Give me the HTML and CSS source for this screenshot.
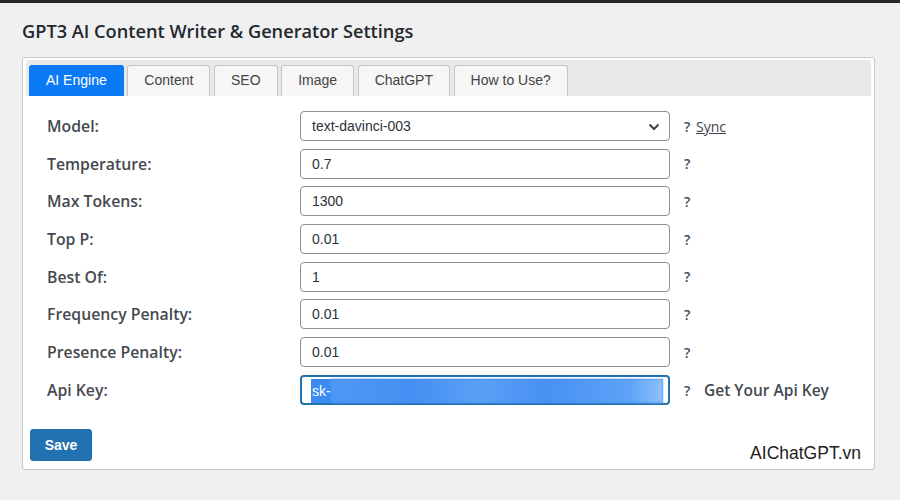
FILE: index.html
```html
<!DOCTYPE html>
<html>
<head>
<meta charset="utf-8">
<link rel="stylesheet" href="styles.css">
</head>
<body>
<div class="topbar"></div>
<div class="wrap">
  <h1 class="title">GPT3 AI Content Writer &amp; Generator Settings</h1>
  <div class="panel">
    <div class="tabs">
      <div class="tab active">AI Engine</div>
      <div class="tab">Content</div>
      <div class="tab">SEO</div>
      <div class="tab">Image</div>
      <div class="tab">ChatGPT</div>
      <div class="tab">How to Use?</div>
    </div>
    <div class="form">
      <div class="label">Model:</div>
      <div class="field select">text-davinci-003
        <svg class="chev" width="12" height="8" viewBox="0 0 12 8"><path d="M1.5 1.5 L6 6 L10.5 1.5" fill="none" stroke="#3c434a" stroke-width="2"/></svg>
      </div>
      <div class="help">? <a class="link">Sync</a></div>

      <div class="label">Temperature:</div>
      <div class="field">0.7</div>
      <div class="help">?</div>

      <div class="label">Max Tokens:</div>
      <div class="field">1300</div>
      <div class="help">?</div>

      <div class="label">Top P:</div>
      <div class="field">0.01</div>
      <div class="help">?</div>

      <div class="label">Best Of:</div>
      <div class="field">1</div>
      <div class="help">?</div>

      <div class="label">Frequency Penalty:</div>
      <div class="field">0.01</div>
      <div class="help">?</div>

      <div class="label">Presence Penalty:</div>
      <div class="field">0.01</div>
      <div class="help">?</div>

      <div class="label">Api Key:</div>
      <div class="field focus"><span class="sel"><span class="sk">sk-</span><span class="blur"></span></span></div>
      <div class="help">? <span class="getkey">Get Your Api Key</span></div>
    </div>
    <button class="save">Save</button>
    <div class="watermark">AIChatGPT.vn</div>
  </div>
</div>
</body>
</html>
```
FILE: styles.css
```css
* { box-sizing: border-box; }
html, body { margin: 0; padding: 0; }
body {
  background: #f0f0f1;
  width: 900px;
  height: 500px;
  overflow: hidden;
  font-family: "Open Sans", "Liberation Sans", sans-serif;
  color: #3c434a;
}
.topbar { height: 3px; background: #23282d; }
.wrap { padding: 0 25px 0 22px; }
.title {
  margin: 0;
  padding-top: 16px;
  height: 54px;
  font-size: 18.2px;
  font-weight: 600;
  color: #23282d;
  line-height: 24px;
}
.panel {
  position: relative;
  width: 853px;
  height: 413px;
  background: #fff;
  border: 1px solid #c8c8c8;
  border-radius: 3px;
  padding: 2px 3px;
}
.tabs {
  display: flex;
  gap: 3.6px;
  background: #e9e9e9;
  border-radius: 3px 3px 0 0;
  padding: 5px 3px 0;
  height: 36px;
}
.tab {
  font-family: "Liberation Sans", Arial, sans-serif;
  font-size: 14px;
  color: #444;
  background: #f6f6f6;
  border: 1px solid #c5c5c5;
  border-bottom: none;
  border-radius: 3px 3px 0 0;
  padding: 0 16px;
  height: 31px;
  line-height: 29px;
}
.tab.active {
  background: #0b7af7;
  border-color: #0b7af7;
  color: #fff;
}
.form {
  display: grid;
  grid-template-columns: 239px 370px auto;
  grid-auto-rows: 30px;
  row-gap: 7.7px;
  column-gap: 14px;
  padding: 15px 0 0 21px;
  align-items: center;
}
.label {
  font-size: 15.8px;
  font-weight: 600;
  color: #444a50;
}
.field {
  height: 30px;
  border: 1px solid #8c8f94;
  border-radius: 4px;
  padding: 0 11px;
  font-family: "Liberation Sans", Arial, sans-serif;
  font-size: 14px;
  line-height: 28px;
  color: #2c3338;
  position: relative;
}
.select .chev { position: absolute; right: 9px; top: 11px; }
.help {
  font-size: 14px;
  font-weight: 600;
  color: #444a50;
}
.link { color: #3c434a; text-decoration: underline; font-weight: 400; margin-left: 2px; }
.getkey { font-size: 15.5px; margin-left: 10px; }
.field.focus {
  border: 2px solid #2271b1;
  padding: 2px 5px 2px 9px;
  line-height: 22px;
}
.sel {
  display: flex;
  height: 24px;
  background: #3a8cf2;
  color: #fff;
  align-items: center;
}
.sk { padding-left: 1px; }
.blur {
  flex: 1;
  height: 100%;
  background: linear-gradient(90deg, #4f98f5 0%, #4690f3 25%, #5aa0f6 45%, #4891f4 65%, #5ea3f7 90%, #8fc0fa 100%);
  filter: blur(1px);
}
.save {
  margin: 24px 0 0 4px;
  width: 62px;
  height: 32px;
  background: #2271b1;
  border: 1px solid #2271b1;
  border-radius: 3px;
  color: #fff;
  font-family: "Liberation Sans", Arial, sans-serif;
  font-size: 14px;
  font-weight: 600;
}
.watermark {
  position: absolute;
  right: 13px;
  bottom: 5px;
  font-family: "Liberation Sans", Arial, sans-serif;
  font-size: 17.5px;
  color: #222;
}
```
